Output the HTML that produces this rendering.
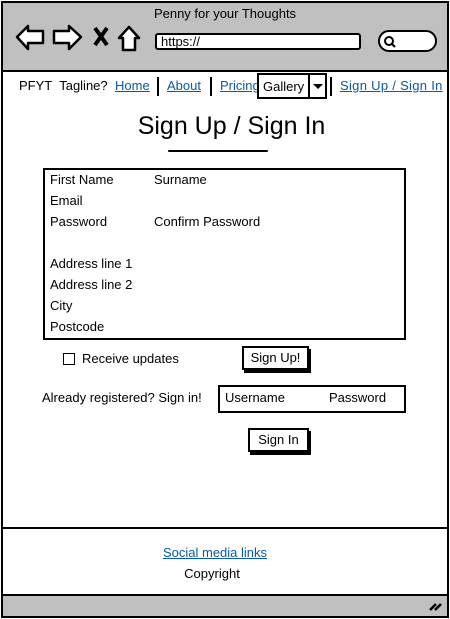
<!DOCTYPE html>
<html><head><style>
*{margin:0;padding:0;box-sizing:border-box}
body{width:450px;height:619px;background:#fff;position:relative;overflow:hidden;font-family:"Liberation Sans",sans-serif;font-size:13px;color:#000}
.a{position:absolute;white-space:nowrap}
.lk{color:#0b5aa0;text-decoration:underline}
.btn{position:absolute;border:2px solid #000;background:#fff;box-shadow:2px 3px 0 #000;text-align:center;font-size:13px}
</style></head><body>
<div class="a" style="left:1px;top:1px;width:448px;height:617px;border:2px solid #000;"></div>
<div class="a" style="left:3px;top:3px;width:444px;height:69px;background:#c0c0c0;border-bottom:2px solid #000"></div>
<div class="a" style="left:0;top:6px;width:450px;text-align:center;font-size:13px">Penny for your Thoughts</div>
<svg class="a" style="left:14px;top:22px" width="135" height="32" viewBox="0 0 135 32">
<path d="M3 15 L14 4 L14 9 L29 9 L29 21 L14 21 L14 27 Z" fill="#fff" stroke="#000" stroke-width="2.5" stroke-linejoin="round"/>
<path d="M67 15 L55 4 L55 9 L40 9 L40 21 L55 21 L55 27 Z" fill="#fff" stroke="#000" stroke-width="2.5" stroke-linejoin="round"/>
<path d="M81 6 L93 23 M93 6 L81 23" stroke="#000" stroke-width="4"/>
<path d="M105 16 L115 5 L125 16 L121 16 L121 28 L109 28 L109 16 Z" fill="#fff" stroke="#000" stroke-width="2.5" stroke-linejoin="round"/>
</svg>
<div class="a" style="left:155px;top:33px;width:206px;height:17px;background:#fff;border:2px solid #000;border-radius:3px;padding-left:4px;line-height:13px">https://</div>
<div class="a" style="left:378px;top:30px;width:59px;height:22px;background:#fff;border:2px solid #000;border-radius:11px"></div>
<svg class="a" style="left:383px;top:35px" width="14" height="14"><circle cx="6" cy="6" r="4" fill="none" stroke="#000" stroke-width="2"/><path d="M9 9 L12 12" stroke="#000" stroke-width="2"/></svg>

<div class="a" style="left:19px;top:78px">PFYT&nbsp; Tagline?</div>
<div class="a lk" style="left:115px;top:78px">Home</div>
<div class="a" style="left:157px;top:77px;width:2px;height:19px;background:#000"></div>
<div class="a lk" style="left:167px;top:78px">About</div>
<div class="a" style="left:210px;top:77px;width:2px;height:19px;background:#000"></div>
<div class="a lk" style="left:220px;top:78px">Pricing</div>
<div class="a" style="left:257px;top:73px;width:53px;height:26px;border:2px solid #000;background:#fff;padding:4px 0 0 4px">Gallery</div>
<div class="a" style="left:308px;top:73px;width:19px;height:26px;border:2px solid #000;background:#fff"></div>
<div class="a" style="left:313px;top:84px;width:0;height:0;border-left:5px solid transparent;border-right:5px solid transparent;border-top:5px solid #000"></div>
<div class="a" style="left:330px;top:77px;width:2px;height:19px;background:#000"></div>
<div class="a lk" style="left:340px;top:78px;letter-spacing:0.3px">Sign Up / Sign In</div>

<div class="a" style="left:0;top:112px;width:463px;text-align:center;font-size:25px">Sign Up / Sign In</div>
<div class="a" style="left:168px;top:150px;width:100px;height:2px;background:#000;border-radius:1px"></div>

<div class="a" style="left:43px;top:168px;width:363px;height:172px;border:2px solid #000"></div>
<div class="a" style="left:50px;top:172px">First Name</div>
<div class="a" style="left:154px;top:172px">Surname</div>
<div class="a" style="left:50px;top:193px">Email</div>
<div class="a" style="left:50px;top:214px">Password</div>
<div class="a" style="left:154px;top:214px">Confirm Password</div>
<div class="a" style="left:50px;top:256px">Address line 1</div>
<div class="a" style="left:50px;top:277px">Address line 2</div>
<div class="a" style="left:50px;top:298px">City</div>
<div class="a" style="left:50px;top:319px">Postcode</div>

<div class="a" style="left:63px;top:353px;width:12px;height:12px;border:1px solid #000"></div>
<div class="a" style="left:82px;top:351px">Receive updates</div>
<div class="btn" style="left:242px;top:346px;width:67px;height:24px;line-height:20px">Sign Up!</div>

<div class="a" style="left:42px;top:390px">Already registered? Sign in!</div>
<div class="a" style="left:218px;top:385px;width:188px;height:28px;border:2px solid #000"></div>
<div class="a" style="left:225px;top:390px">Username</div>
<div class="a" style="left:329px;top:390px">Password</div>
<div class="btn" style="left:248px;top:428px;width:61px;height:24px;line-height:20px">Sign In</div>

<div class="a" style="left:3px;top:527px;width:444px;height:2px;background:#000"></div>
<div class="a lk" style="left:0;top:545px;width:430px;text-align:center">Social media links</div>
<div class="a" style="left:0;top:566px;width:424px;text-align:center">Copyright</div>
<div class="a" style="left:3px;top:594px;width:444px;height:22px;background:#c0c0c0;border-top:2px solid #000"></div>
<svg class="a" style="left:428px;top:600px" width="16" height="12"><path d="M2 10 L8 4 M7 10 L13 4" stroke="#000" stroke-width="2.5"/></svg>
</body></html>
